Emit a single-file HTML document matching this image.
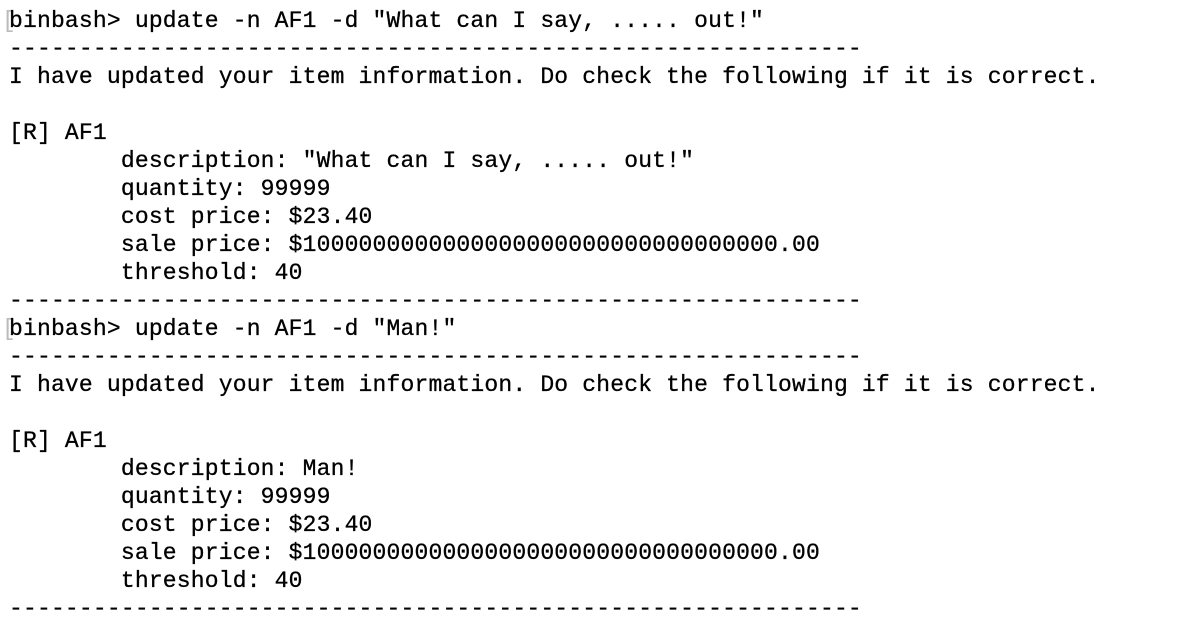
<!DOCTYPE html>
<html><head><meta charset="utf-8"><style>
html,body{margin:0;padding:0;background:#fff;width:1188px;height:614px;overflow:hidden}
pre{margin:0;position:absolute;left:9px;top:7px;font-family:"Liberation Mono",monospace;font-size:23px;line-height:28px;color:#000;letter-spacing:0.18px;-webkit-text-stroke:0.3px #000}
.b{position:absolute;left:2px;font-family:"Liberation Mono",monospace;font-size:23px;line-height:28px;color:#bbb}
</style></head><body>
<div class="b" style="top:7px">[</div>
<div class="b" style="top:315px">[</div>
<pre>binbash&gt; update -n AF1 -d "What can I say, ..... out!"
-------------------------------------------------------------
I have updated your item information. Do check the following if it is correct.

[R] AF1
        description: "What can I say, ..... out!"
        quantity: 99999
        cost price: $23.40
        sale price: $1000000000000000000000000000000000.00
        threshold: 40
-------------------------------------------------------------
binbash&gt; update -n AF1 -d "Man!"
-------------------------------------------------------------
I have updated your item information. Do check the following if it is correct.

[R] AF1
        description: Man!
        quantity: 99999
        cost price: $23.40
        sale price: $1000000000000000000000000000000000.00
        threshold: 40
-------------------------------------------------------------</pre>
</body></html>
